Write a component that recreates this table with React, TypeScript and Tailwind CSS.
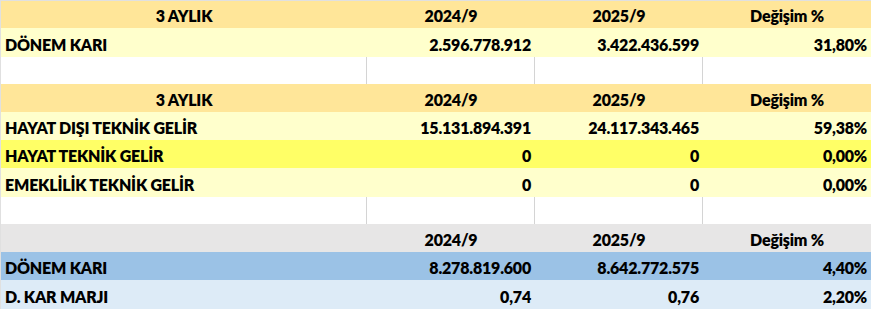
type Row =
  | { kind: "head"; bg: string; h: string; cells: string[] }
  | { kind: "data"; bg: string; h: string; cells: string[] }
  | { kind: "blank"; h: string };

const rows: Row[] = [
  { kind: "head", bg: "bg-[#ffe699]", h: "h-[27px]", cells: ["3 AYLIK", "2024/9", "2025/9", "Değişim %"] },
  { kind: "data", bg: "bg-[#ffffcc]", h: "h-[29px]", cells: ["DÖNEM KARI", "2.596.778.912", "3.422.436.599", "31,80%"] },
  { kind: "blank", h: "h-[27px]" },
  { kind: "head", bg: "bg-[#ffe699]", h: "h-[28px]", cells: ["3 AYLIK", "2024/9", "2025/9", "Değişim %"] },
  { kind: "data", bg: "bg-[#ffffcc]", h: "h-[28px]", cells: ["HAYAT DIŞI TEKNİK GELİR", "15.131.894.391", "24.117.343.465", "59,38%"] },
  { kind: "data", bg: "bg-[#ffff66]", h: "h-[28px]", cells: ["HAYAT TEKNİK GELİR", "0", "0", "0,00%"] },
  { kind: "data", bg: "bg-[#ffffcc]", h: "h-[29px]", cells: ["EMEKLİLİK TEKNİK GELİR", "0", "0", "0,00%"] },
  { kind: "blank", h: "h-[27px]" },
  { kind: "head", bg: "bg-[#e7e6e6]", h: "h-[28px]", cells: ["", "2024/9", "2025/9", "Değişim %"] },
  { kind: "data", bg: "bg-[#9bc2e6]", h: "h-[28px]", cells: ["DÖNEM KARI", "8.278.819.600", "8.642.772.575", "4,40%"] },
  { kind: "data", bg: "bg-[#ddebf7]", h: "h-[29px]", cells: ["D. KAR MARJI", "0,74", "0,76", "2,20%"] },
];

const cols = "grid grid-cols-[366px_168px_168px_168px]";

export default function App() {
  return (
    <div
      className="w-[871px] h-[309px] bg-white border-t border-l border-[#e0e0e0] overflow-hidden text-[16px] tracking-[-0.2px] font-extrabold text-black leading-none"
      style={{ fontFamily: "Lato, 'Open Sans', sans-serif" }}
    >
      {rows.map((r, i) => {
        if (r.kind === "blank") {
          return (
            <div key={i} className={`${cols} ${r.h}`}>
              <div className="border-r border-[#d4d4d4]" />
              <div className="border-r border-[#d4d4d4]" />
              <div className="border-r border-[#d4d4d4]" />
              <div />
            </div>
          );
        }
        if (r.kind === "head") {
          return (
            <div key={i} className={`${cols} ${r.h} ${r.bg}`}>
              {r.cells.map((c, j) => (
                <div key={j} className="flex items-end justify-center pb-[4px]">
                  {c}
                </div>
              ))}
            </div>
          );
        }
        return (
          <div key={i} className={`${cols} ${r.h} ${r.bg}`}>
            {r.cells.map((c, j) => (
              <div
                key={j}
                className={`flex items-end pb-[4px] ${j === 0 ? "justify-start pl-[4px]" : "justify-end pr-[4px]"}`}
              >
                {c}
              </div>
            ))}
          </div>
        );
      })}
    </div>
  );
}
